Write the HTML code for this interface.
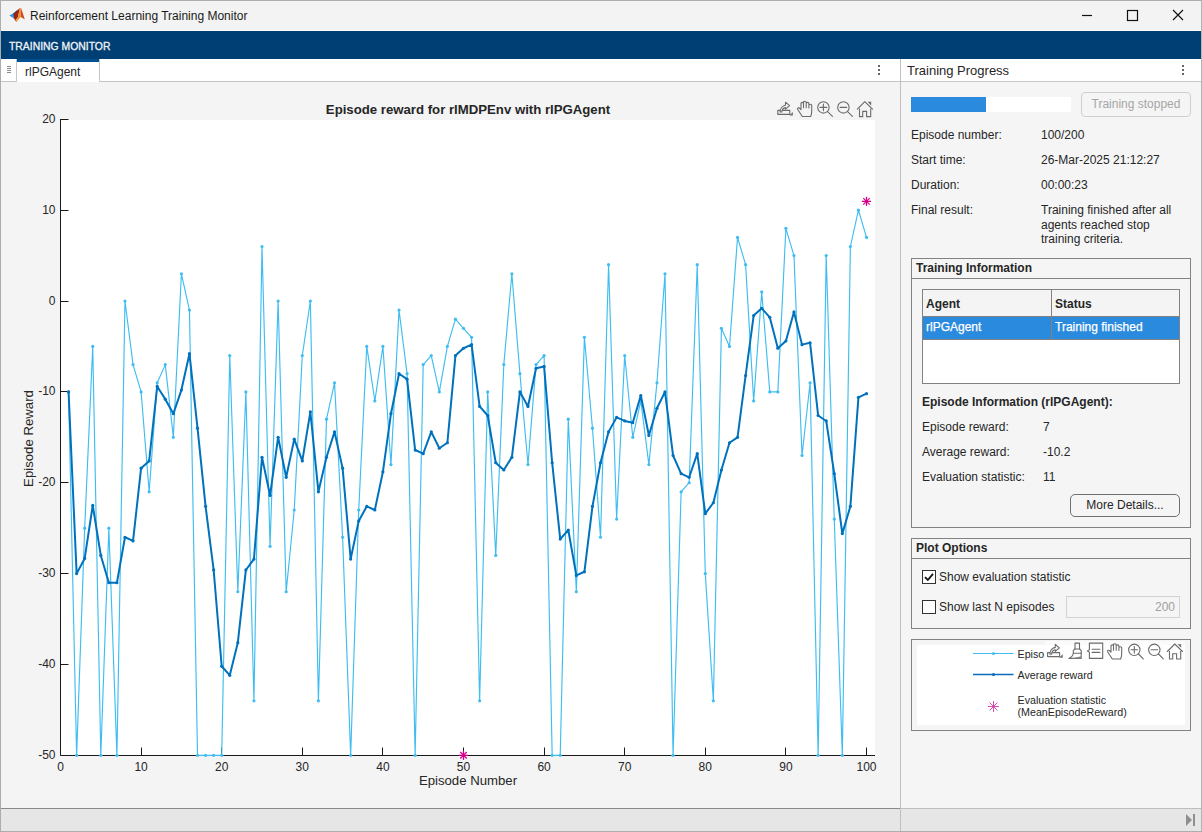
<!DOCTYPE html>
<html><head><meta charset="utf-8">
<style>
*{margin:0;padding:0;box-sizing:border-box}
html,body{width:1202px;height:832px;overflow:hidden;background:#f5f5f5;font-family:"Liberation Sans",sans-serif;color:#262626}
.a{position:absolute}
.t{position:absolute;white-space:nowrap;font-size:12px;line-height:14px}
#win{position:absolute;left:0;top:0;width:1202px;height:832px;border:1px solid #adadad;border-right-color:#b4b4b4}
</style></head><body>
<!-- title bar -->
<div class="a" style="left:0;top:0;width:1202px;height:31px;background:#f3f3f3"></div>
<div class="a" style="left:1px;top:30px;width:1200px;height:1px;background:#fbfbfb"></div>
<svg class="a" style="left:8px;top:6px" width="18" height="18" viewBox="0 0 18 18">
 <path d="M1.2,9.4 L5.9,7.3 L9.4,4.1 L7.6,10.5 L5.9,12.3 Z" fill="#3d8fd6"/>
 <path d="M4.5,8 L9.4,4.1 L7,10 Z" fill="#1f5f9a"/>
 <path d="M5.9,7.6 L11.8,2 L10.2,10 L8.3,16 L5.9,12.3 Z" fill="#9a2414"/>
 <path d="M11.8,2 L13.2,3.8 L12.6,11 L8.3,16 L10.2,10 Z" fill="#ef9030"/>
 <path d="M11.8,2 L13.4,2.8 L16.8,13.6 L13.8,11.6 L12.6,11 L13.2,3.8 Z" fill="#d24a1e"/>
 <path d="M7.5,13.5 L10.5,11 L8.3,16 Z" fill="#f5a23a"/>
</svg>
<div class="t" style="left:30px;top:9px;font-size:12px;color:#1a1a1a">Reinforcement Learning Training Monitor</div>
<svg class="a" style="left:1070px;top:0" width="132" height="31">
 <g stroke="#111" stroke-width="1.2" fill="none">
 <path d="M12,15.5 H22"/>
 <rect x="57.5" y="10.5" width="10" height="10"/>
 <path d="M103,10 L113,20 M113,10 L103,20"/>
 </g>
</svg>
<!-- toolstrip -->
<div class="a" style="left:1px;top:31px;width:1200px;height:28px;background:#003f73"></div>
<div class="t" style="left:9px;top:40px;font-size:10.4px;color:#f0f4f8;-webkit-text-stroke:0.3px #f0f4f8">TRAINING MONITOR</div>
<!-- left tab row -->
<div class="a" style="left:1px;top:59px;width:899px;height:23px;background:#fff;border-bottom:1px solid #c8c8c8"></div>
<div class="a" style="left:1px;top:59px;width:16px;height:23px;background:#fff;border-right:1px solid #c4c4c4;border-bottom:1px solid #c4c4c4;border-radius:0 0 2px 0"></div>
<svg class="a" style="left:7px;top:66px" width="6" height="10"><g fill="#8a8a8a"><rect x="0" y="0" width="4" height="1"/><rect x="0" y="2" width="4" height="1"/><rect x="0" y="4" width="4" height="1"/><rect x="0" y="6" width="4" height="1"/></g></svg>
<div class="a" style="left:17px;top:59px;width:82px;height:23px;background:#fff;border-top:3px solid #004f8f"></div>
<div class="a" style="left:99px;top:59px;width:801px;height:23px;background:#fff;border-left:1px solid #c4c4c4;border-bottom:1px solid #c4c4c4;border-radius:0 0 0 2px"></div>
<div class="t" style="left:25px;top:65px;font-size:12px;color:#262626">rlPGAgent</div>
<svg class="a" style="left:876px;top:64px" width="6" height="12"><g fill="#666"><rect x="2" y="1" width="2" height="2"/><rect x="2" y="5" width="2" height="2"/><rect x="2" y="9" width="2" height="2"/></g></svg>
<!-- left content bg -->
<div class="a" style="left:1px;top:82px;width:899px;height:726px;background:#f4f4f4"></div>
<!-- chart -->
<svg class="a" style="left:0;top:0" width="900" height="808">
<defs><clipPath id="pc"><rect x="58" y="116" width="820" height="644"/></clipPath></defs>
<rect x="60" y="120" width="815" height="636" fill="#fff"/>
<g stroke="#1a1a1a" stroke-width="1" fill="none">
<path d="M60.5,119 V755.5 H875"/>
<path d="M60.5,119.5 h8"/>
<path d="M60.5,210.5 h8"/>
<path d="M60.5,301.5 h8"/>
<path d="M60.5,391.5 h8"/>
<path d="M60.5,482.5 h8"/>
<path d="M60.5,573.5 h8"/>
<path d="M60.5,664.5 h8"/>
<path d="M60.5,755.5 h8"/>
<path d="M141.5,755.5 v-8"/>
<path d="M221.5,755.5 v-8"/>
<path d="M302.5,755.5 v-8"/>
<path d="M382.5,755.5 v-8"/>
<path d="M463.5,755.5 v-8"/>
<path d="M544.5,755.5 v-8"/>
<path d="M624.5,755.5 v-8"/>
<path d="M705.5,755.5 v-8"/>
<path d="M785.5,755.5 v-8"/>
<path d="M866.5,755.5 v-8"/>
</g>
<g clip-path="url(#pc)">
<polyline points="68.56,391.88 76.62,755.32 84.68,528.17 92.74,346.45 100.80,755.32 108.86,528.17 116.92,755.32 124.98,301.02 133.04,364.62 141.10,391.88 149.16,491.83 157.22,382.79 165.28,364.62 173.34,437.31 181.40,273.76 189.46,310.11 197.52,755.32 205.58,755.32 213.64,755.32 221.70,755.32 229.76,355.54 237.82,591.77 245.88,391.88 253.94,700.80 262.00,246.50 270.06,546.34 278.12,301.02 286.18,591.77 294.24,510.00 302.30,355.54 310.36,301.02 318.42,700.80 326.48,419.14 334.54,382.79 342.60,537.26 350.66,755.32 358.72,510.00 366.78,346.45 374.84,400.97 382.90,346.45 390.96,464.57 399.02,310.11 407.08,373.71 415.14,755.32 423.20,364.62 431.26,355.54 439.32,391.88 447.38,346.45 455.44,319.19 463.50,328.28 471.56,337.36 479.62,700.80 487.68,391.88 495.74,555.43 503.80,364.62 511.86,273.76 519.92,373.71 527.98,464.57 536.04,364.62 544.10,355.54 552.16,755.32 560.22,755.32 568.28,419.14 576.34,591.77 584.40,337.36 592.46,428.22 600.52,537.26 608.58,264.68 616.64,519.08 624.70,355.54 632.76,437.31 640.82,400.97 648.88,464.57 656.94,382.79 665.00,273.76 673.06,755.32 681.12,491.83 689.18,482.74 697.24,264.68 705.30,573.60 713.36,700.80 721.42,328.28 729.48,346.45 737.54,237.42 745.60,264.68 753.66,400.97 761.72,291.93 769.78,391.88 777.84,391.88 785.90,228.33 793.96,255.59 802.02,455.48 810.08,382.79 818.14,755.32 826.20,255.59 834.26,519.08 842.32,755.32 850.38,246.50 858.44,210.16 866.50,237.42" fill="none" stroke="#3FBDF0" stroke-width="1.15" stroke-linejoin="round"/>
<g fill="#3FBDF0"><circle cx="68.56" cy="391.88" r="1.6"/><circle cx="76.62" cy="755.32" r="1.6"/><circle cx="84.68" cy="528.17" r="1.6"/><circle cx="92.74" cy="346.45" r="1.6"/><circle cx="100.80" cy="755.32" r="1.6"/><circle cx="108.86" cy="528.17" r="1.6"/><circle cx="116.92" cy="755.32" r="1.6"/><circle cx="124.98" cy="301.02" r="1.6"/><circle cx="133.04" cy="364.62" r="1.6"/><circle cx="141.10" cy="391.88" r="1.6"/><circle cx="149.16" cy="491.83" r="1.6"/><circle cx="157.22" cy="382.79" r="1.6"/><circle cx="165.28" cy="364.62" r="1.6"/><circle cx="173.34" cy="437.31" r="1.6"/><circle cx="181.40" cy="273.76" r="1.6"/><circle cx="189.46" cy="310.11" r="1.6"/><circle cx="197.52" cy="755.32" r="1.6"/><circle cx="205.58" cy="755.32" r="1.6"/><circle cx="213.64" cy="755.32" r="1.6"/><circle cx="221.70" cy="755.32" r="1.6"/><circle cx="229.76" cy="355.54" r="1.6"/><circle cx="237.82" cy="591.77" r="1.6"/><circle cx="245.88" cy="391.88" r="1.6"/><circle cx="253.94" cy="700.80" r="1.6"/><circle cx="262.00" cy="246.50" r="1.6"/><circle cx="270.06" cy="546.34" r="1.6"/><circle cx="278.12" cy="301.02" r="1.6"/><circle cx="286.18" cy="591.77" r="1.6"/><circle cx="294.24" cy="510.00" r="1.6"/><circle cx="302.30" cy="355.54" r="1.6"/><circle cx="310.36" cy="301.02" r="1.6"/><circle cx="318.42" cy="700.80" r="1.6"/><circle cx="326.48" cy="419.14" r="1.6"/><circle cx="334.54" cy="382.79" r="1.6"/><circle cx="342.60" cy="537.26" r="1.6"/><circle cx="350.66" cy="755.32" r="1.6"/><circle cx="358.72" cy="510.00" r="1.6"/><circle cx="366.78" cy="346.45" r="1.6"/><circle cx="374.84" cy="400.97" r="1.6"/><circle cx="382.90" cy="346.45" r="1.6"/><circle cx="390.96" cy="464.57" r="1.6"/><circle cx="399.02" cy="310.11" r="1.6"/><circle cx="407.08" cy="373.71" r="1.6"/><circle cx="415.14" cy="755.32" r="1.6"/><circle cx="423.20" cy="364.62" r="1.6"/><circle cx="431.26" cy="355.54" r="1.6"/><circle cx="439.32" cy="391.88" r="1.6"/><circle cx="447.38" cy="346.45" r="1.6"/><circle cx="455.44" cy="319.19" r="1.6"/><circle cx="463.50" cy="328.28" r="1.6"/><circle cx="471.56" cy="337.36" r="1.6"/><circle cx="479.62" cy="700.80" r="1.6"/><circle cx="487.68" cy="391.88" r="1.6"/><circle cx="495.74" cy="555.43" r="1.6"/><circle cx="503.80" cy="364.62" r="1.6"/><circle cx="511.86" cy="273.76" r="1.6"/><circle cx="519.92" cy="373.71" r="1.6"/><circle cx="527.98" cy="464.57" r="1.6"/><circle cx="536.04" cy="364.62" r="1.6"/><circle cx="544.10" cy="355.54" r="1.6"/><circle cx="552.16" cy="755.32" r="1.6"/><circle cx="560.22" cy="755.32" r="1.6"/><circle cx="568.28" cy="419.14" r="1.6"/><circle cx="576.34" cy="591.77" r="1.6"/><circle cx="584.40" cy="337.36" r="1.6"/><circle cx="592.46" cy="428.22" r="1.6"/><circle cx="600.52" cy="537.26" r="1.6"/><circle cx="608.58" cy="264.68" r="1.6"/><circle cx="616.64" cy="519.08" r="1.6"/><circle cx="624.70" cy="355.54" r="1.6"/><circle cx="632.76" cy="437.31" r="1.6"/><circle cx="640.82" cy="400.97" r="1.6"/><circle cx="648.88" cy="464.57" r="1.6"/><circle cx="656.94" cy="382.79" r="1.6"/><circle cx="665.00" cy="273.76" r="1.6"/><circle cx="673.06" cy="755.32" r="1.6"/><circle cx="681.12" cy="491.83" r="1.6"/><circle cx="689.18" cy="482.74" r="1.6"/><circle cx="697.24" cy="264.68" r="1.6"/><circle cx="705.30" cy="573.60" r="1.6"/><circle cx="713.36" cy="700.80" r="1.6"/><circle cx="721.42" cy="328.28" r="1.6"/><circle cx="729.48" cy="346.45" r="1.6"/><circle cx="737.54" cy="237.42" r="1.6"/><circle cx="745.60" cy="264.68" r="1.6"/><circle cx="753.66" cy="400.97" r="1.6"/><circle cx="761.72" cy="291.93" r="1.6"/><circle cx="769.78" cy="391.88" r="1.6"/><circle cx="777.84" cy="391.88" r="1.6"/><circle cx="785.90" cy="228.33" r="1.6"/><circle cx="793.96" cy="255.59" r="1.6"/><circle cx="802.02" cy="455.48" r="1.6"/><circle cx="810.08" cy="382.79" r="1.6"/><circle cx="818.14" cy="755.32" r="1.6"/><circle cx="826.20" cy="255.59" r="1.6"/><circle cx="834.26" cy="519.08" r="1.6"/><circle cx="842.32" cy="755.32" r="1.6"/><circle cx="850.38" cy="246.50" r="1.6"/><circle cx="858.44" cy="210.16" r="1.6"/><circle cx="866.50" cy="237.42" r="1.6"/></g>
<polyline points="68.56,391.88 76.62,573.60 84.68,558.46 92.74,505.46 100.80,555.43 108.86,582.69 116.92,582.69 124.98,537.26 133.04,540.89 141.10,468.20 149.16,460.93 157.22,386.43 165.28,399.15 173.34,413.69 181.40,390.06 189.46,353.72 197.52,428.22 205.58,506.36 213.64,569.97 221.70,666.28 229.76,675.36 237.82,642.65 245.88,569.97 253.94,559.06 262.00,457.30 270.06,495.46 278.12,437.31 286.18,477.29 294.24,439.13 302.30,460.93 310.36,411.87 318.42,491.83 326.48,457.30 334.54,431.86 342.60,468.20 350.66,559.06 358.72,520.90 366.78,506.36 374.84,510.00 382.90,471.84 390.96,413.69 399.02,373.71 407.08,379.16 415.14,450.03 423.20,453.66 431.26,431.86 439.32,448.21 447.38,442.76 455.44,355.54 463.50,348.27 471.56,344.63 479.62,406.42 487.68,415.50 495.74,462.75 503.80,470.02 511.86,457.30 519.92,391.88 527.98,406.42 536.04,368.26 544.10,366.44 552.16,462.75 560.22,539.07 568.28,529.99 576.34,575.42 584.40,571.78 592.46,506.36 600.52,462.75 608.58,431.86 616.64,417.32 624.70,420.96 632.76,422.77 640.82,395.51 648.88,435.49 656.94,408.23 665.00,391.88 673.06,455.48 681.12,473.65 689.18,477.29 697.24,453.66 705.30,513.63 713.36,502.73 721.42,470.02 729.48,442.76 737.54,437.31 745.60,375.53 753.66,315.56 761.72,308.29 769.78,317.37 777.84,348.27 785.90,341.00 793.96,311.92 802.02,344.63 810.08,342.82 818.14,415.50 826.20,420.96 834.26,473.65 842.32,533.62 850.38,506.36 858.44,397.33 866.50,393.70" fill="none" stroke="#0072BD" stroke-width="2" stroke-linejoin="round"/>
<g fill="#0072BD"><circle cx="68.56" cy="391.88" r="1.6"/><circle cx="76.62" cy="573.60" r="1.6"/><circle cx="84.68" cy="558.46" r="1.6"/><circle cx="92.74" cy="505.46" r="1.6"/><circle cx="100.80" cy="555.43" r="1.6"/><circle cx="108.86" cy="582.69" r="1.6"/><circle cx="116.92" cy="582.69" r="1.6"/><circle cx="124.98" cy="537.26" r="1.6"/><circle cx="133.04" cy="540.89" r="1.6"/><circle cx="141.10" cy="468.20" r="1.6"/><circle cx="149.16" cy="460.93" r="1.6"/><circle cx="157.22" cy="386.43" r="1.6"/><circle cx="165.28" cy="399.15" r="1.6"/><circle cx="173.34" cy="413.69" r="1.6"/><circle cx="181.40" cy="390.06" r="1.6"/><circle cx="189.46" cy="353.72" r="1.6"/><circle cx="197.52" cy="428.22" r="1.6"/><circle cx="205.58" cy="506.36" r="1.6"/><circle cx="213.64" cy="569.97" r="1.6"/><circle cx="221.70" cy="666.28" r="1.6"/><circle cx="229.76" cy="675.36" r="1.6"/><circle cx="237.82" cy="642.65" r="1.6"/><circle cx="245.88" cy="569.97" r="1.6"/><circle cx="253.94" cy="559.06" r="1.6"/><circle cx="262.00" cy="457.30" r="1.6"/><circle cx="270.06" cy="495.46" r="1.6"/><circle cx="278.12" cy="437.31" r="1.6"/><circle cx="286.18" cy="477.29" r="1.6"/><circle cx="294.24" cy="439.13" r="1.6"/><circle cx="302.30" cy="460.93" r="1.6"/><circle cx="310.36" cy="411.87" r="1.6"/><circle cx="318.42" cy="491.83" r="1.6"/><circle cx="326.48" cy="457.30" r="1.6"/><circle cx="334.54" cy="431.86" r="1.6"/><circle cx="342.60" cy="468.20" r="1.6"/><circle cx="350.66" cy="559.06" r="1.6"/><circle cx="358.72" cy="520.90" r="1.6"/><circle cx="366.78" cy="506.36" r="1.6"/><circle cx="374.84" cy="510.00" r="1.6"/><circle cx="382.90" cy="471.84" r="1.6"/><circle cx="390.96" cy="413.69" r="1.6"/><circle cx="399.02" cy="373.71" r="1.6"/><circle cx="407.08" cy="379.16" r="1.6"/><circle cx="415.14" cy="450.03" r="1.6"/><circle cx="423.20" cy="453.66" r="1.6"/><circle cx="431.26" cy="431.86" r="1.6"/><circle cx="439.32" cy="448.21" r="1.6"/><circle cx="447.38" cy="442.76" r="1.6"/><circle cx="455.44" cy="355.54" r="1.6"/><circle cx="463.50" cy="348.27" r="1.6"/><circle cx="471.56" cy="344.63" r="1.6"/><circle cx="479.62" cy="406.42" r="1.6"/><circle cx="487.68" cy="415.50" r="1.6"/><circle cx="495.74" cy="462.75" r="1.6"/><circle cx="503.80" cy="470.02" r="1.6"/><circle cx="511.86" cy="457.30" r="1.6"/><circle cx="519.92" cy="391.88" r="1.6"/><circle cx="527.98" cy="406.42" r="1.6"/><circle cx="536.04" cy="368.26" r="1.6"/><circle cx="544.10" cy="366.44" r="1.6"/><circle cx="552.16" cy="462.75" r="1.6"/><circle cx="560.22" cy="539.07" r="1.6"/><circle cx="568.28" cy="529.99" r="1.6"/><circle cx="576.34" cy="575.42" r="1.6"/><circle cx="584.40" cy="571.78" r="1.6"/><circle cx="592.46" cy="506.36" r="1.6"/><circle cx="600.52" cy="462.75" r="1.6"/><circle cx="608.58" cy="431.86" r="1.6"/><circle cx="616.64" cy="417.32" r="1.6"/><circle cx="624.70" cy="420.96" r="1.6"/><circle cx="632.76" cy="422.77" r="1.6"/><circle cx="640.82" cy="395.51" r="1.6"/><circle cx="648.88" cy="435.49" r="1.6"/><circle cx="656.94" cy="408.23" r="1.6"/><circle cx="665.00" cy="391.88" r="1.6"/><circle cx="673.06" cy="455.48" r="1.6"/><circle cx="681.12" cy="473.65" r="1.6"/><circle cx="689.18" cy="477.29" r="1.6"/><circle cx="697.24" cy="453.66" r="1.6"/><circle cx="705.30" cy="513.63" r="1.6"/><circle cx="713.36" cy="502.73" r="1.6"/><circle cx="721.42" cy="470.02" r="1.6"/><circle cx="729.48" cy="442.76" r="1.6"/><circle cx="737.54" cy="437.31" r="1.6"/><circle cx="745.60" cy="375.53" r="1.6"/><circle cx="753.66" cy="315.56" r="1.6"/><circle cx="761.72" cy="308.29" r="1.6"/><circle cx="769.78" cy="317.37" r="1.6"/><circle cx="777.84" cy="348.27" r="1.6"/><circle cx="785.90" cy="341.00" r="1.6"/><circle cx="793.96" cy="311.92" r="1.6"/><circle cx="802.02" cy="344.63" r="1.6"/><circle cx="810.08" cy="342.82" r="1.6"/><circle cx="818.14" cy="415.50" r="1.6"/><circle cx="826.20" cy="420.96" r="1.6"/><circle cx="834.26" cy="473.65" r="1.6"/><circle cx="842.32" cy="533.62" r="1.6"/><circle cx="850.38" cy="506.36" r="1.6"/><circle cx="858.44" cy="397.33" r="1.6"/><circle cx="866.50" cy="393.70" r="1.6"/></g>
</g>
<g stroke="#D4008C" stroke-width="1.3"><line x1="458.90" y1="755.32" x2="468.10" y2="755.32"/><line x1="460.25" y1="752.07" x2="466.75" y2="758.57"/><line x1="463.50" y1="750.72" x2="463.50" y2="759.92"/><line x1="466.75" y1="752.07" x2="460.25" y2="758.57"/></g>
<g stroke="#D4008C" stroke-width="1.3"><line x1="861.90" y1="201.37" x2="871.10" y2="201.37"/><line x1="863.25" y1="198.12" x2="869.75" y2="204.63"/><line x1="866.50" y1="196.77" x2="866.50" y2="205.97"/><line x1="869.75" y1="198.12" x2="863.25" y2="204.63"/></g>
<g font-family="Liberation Sans" font-size="12" fill="#262626">
<text x="55.5" y="122.80" text-anchor="end">20</text>
<text x="55.5" y="213.66" text-anchor="end">10</text>
<text x="55.5" y="304.52" text-anchor="end">0</text>
<text x="55.5" y="395.38" text-anchor="end">-10</text>
<text x="55.5" y="486.24" text-anchor="end">-20</text>
<text x="55.5" y="577.10" text-anchor="end">-30</text>
<text x="55.5" y="667.96" text-anchor="end">-40</text>
<text x="55.5" y="758.82" text-anchor="end">-50</text>
<text x="60.50" y="770.5" text-anchor="middle">0</text>
<text x="141.10" y="770.5" text-anchor="middle">10</text>
<text x="221.70" y="770.5" text-anchor="middle">20</text>
<text x="302.30" y="770.5" text-anchor="middle">30</text>
<text x="382.90" y="770.5" text-anchor="middle">40</text>
<text x="463.50" y="770.5" text-anchor="middle">50</text>
<text x="544.10" y="770.5" text-anchor="middle">60</text>
<text x="624.70" y="770.5" text-anchor="middle">70</text>
<text x="705.30" y="770.5" text-anchor="middle">80</text>
<text x="785.90" y="770.5" text-anchor="middle">90</text>
<text x="866.50" y="770.5" text-anchor="middle">100</text>
</g>
<text x="468" y="785" text-anchor="middle" font-family="Liberation Sans" font-size="13.2" fill="#262626">Episode Number</text>
<text transform="translate(33,438.5) rotate(-90)" text-anchor="middle" font-family="Liberation Sans" font-size="13.2" fill="#262626">Episode Reward</text>
<text x="468" y="114" text-anchor="middle" font-family="Liberation Sans" font-weight="bold" font-size="13.2" fill="#262626">Episode reward for rlMDPEnv with rlPGAgent</text>
</svg>
<!-- axes toolbar -->
<svg class="a" style="left:774px;top:98px" width="102" height="22"><g stroke="#6b6b6b" stroke-width="1.1" fill="none" stroke-linecap="round" stroke-linejoin="round"><rect x="3.8" y="12.4" width="12" height="4" fill="none"/><path d="M6.1,14.0 C6.1,10.0 8.8,7.6 11.5,7.2 V4.2 L15.6,7.6 L11.5,11.2 V9.6 C9.4,9.9 8.0,11.6 7.8,14.0 Z" fill="#f4f4f4"/><path d="M15.4,17.6 L18.9,14.0 V17.6 Z" fill="#6b6b6b" stroke="none"/><path d="M28.3,18.5 L23.6,11.2 C23.1,10.2 24.4,9.3 25.4,10.0 L27.0,11.6 V5.4 C27.0,4.0 29.5,4.0 29.5,5.4 V9.8 V4.4 C29.5,2.9 32.2,2.9 32.2,4.4 V9.8 V5.4 C32.2,4.0 34.9,4.0 34.9,5.4 V10.0 V7.3 C34.9,5.9 37.7,5.9 37.7,7.3 V13.0 C37.7,15.3 37.2,17.0 36.7,18.5 Z"/><circle cx="49.4" cy="9.4" r="5.7"/><path d="M53.6,13.6 L58.4,18.4"/><path d="M46.1,9.4 H52.7"/><path d="M49.4,6.1 V12.7"/><circle cx="69.4" cy="9.4" r="5.7"/><path d="M73.6,13.6 L78.4,18.4"/><path d="M66.1,9.4 H72.7"/><path d="M83.3,11.1 L90.8,3.6 L98.5,11.1"/><path d="M85.5,10.6 V18.6 H88.7 V13.4 H92.6 V18.6 H96.7 V10.6" stroke-linecap="butt" stroke-linejoin="miter"/><path d="M93.6,3.8 H97.2 V7.4 Z" fill="#6b6b6b" stroke="none"/></g></svg>
<!-- divider -->
<div class="a" style="left:900px;top:59px;width:1px;height:773px;background:#c0c0c0"></div>
<!-- right header -->
<div class="a" style="left:901px;top:59px;width:300px;height:23px;background:#fff;border-bottom:1px solid #c8c8c8"></div>
<div class="t" style="left:907px;top:63px;font-size:13px;line-height:15px;color:#262626">Training Progress</div>
<svg class="a" style="left:1181px;top:64px" width="6" height="12"><g fill="#666"><rect x="1" y="1" width="2" height="2"/><rect x="1" y="5" width="2" height="2"/><rect x="1" y="9" width="2" height="2"/></g></svg>
<div class="a" style="left:901px;top:82px;width:300px;height:726px;background:#f5f5f5"></div>
<!-- progress -->
<div class="a" style="left:911px;top:97px;width:160px;height:15px;background:#fff"></div>
<div class="a" style="left:911px;top:97px;width:75px;height:15px;background:#2a8ade"></div>
<div class="a" style="left:1081px;top:92px;width:110px;height:25px;border:1px solid #cfcfcf;border-radius:4px;background:#f5f5f5"></div>
<div class="t" style="left:1081px;top:97px;width:110px;text-align:center;color:#a6a6a6">Training stopped</div>
<!-- info rows -->
<div class="t" style="left:911px;top:128px">Episode number:</div><div class="t" style="left:1041px;top:128px">100/200</div>
<div class="t" style="left:911px;top:153px">Start time:</div><div class="t" style="left:1041px;top:153px">26-Mar-2025 21:12:27</div>
<div class="t" style="left:911px;top:178px">Duration:</div><div class="t" style="left:1041px;top:178px">00:00:23</div>
<div class="t" style="left:911px;top:203px">Final result:</div><div class="t" style="left:1041px;top:203px;line-height:14.7px">Training finished after all<br>agents reached stop<br>training criteria.</div>
<!-- training information -->
<div class="a" style="left:911px;top:258px;width:280px;height:270px;border:1px solid #828282"></div>
<div class="a" style="left:912px;top:278px;width:278px;height:1px;background:#828282"></div>
<div class="t" style="left:916px;top:261px;font-weight:bold">Training Information</div>
<div class="a" style="left:922px;top:289px;width:258px;height:95px;border:1px solid #828282;background:#fff"></div>
<div class="a" style="left:923px;top:290px;width:256px;height:27px;background:#f4f4f4;border-bottom:1px solid #828282"></div>
<div class="a" style="left:923px;top:317px;width:256px;height:23px;background:#2a8ade;border-bottom:1px solid #828282"></div>
<div class="a" style="left:1051px;top:290px;width:1px;height:50px;background:#828282"></div>
<div class="t" style="left:926px;top:297px;font-weight:bold">Agent</div>
<div class="t" style="left:1055px;top:297px;font-weight:bold">Status</div>
<div class="t" style="left:926px;top:320px;color:#fff;-webkit-text-stroke:0.25px #fff">rlPGAgent</div>
<div class="t" style="left:1055px;top:320px;color:#fff;-webkit-text-stroke:0.25px #fff">Training finished</div>
<div class="t" style="left:922px;top:395px;font-weight:bold">Episode Information (rlPGAgent):</div>
<div class="t" style="left:922px;top:420px">Episode reward:</div><div class="t" style="left:1043px;top:420px">7</div>
<div class="t" style="left:922px;top:445px">Average reward:</div><div class="t" style="left:1043px;top:445px">-10.2</div>
<div class="t" style="left:922px;top:470px">Evaluation statistic:</div><div class="t" style="left:1043px;top:470px">11</div>
<div class="a" style="left:1070px;top:494px;width:110px;height:23px;border:1px solid #707070;border-radius:5px;background:#f5f5f5"></div>
<div class="t" style="left:1070px;top:498px;width:110px;text-align:center">More Details...</div>
<!-- plot options -->
<div class="a" style="left:911px;top:538px;width:280px;height:91px;border:1px solid #828282"></div>
<div class="a" style="left:912px;top:558px;width:278px;height:1px;background:#828282"></div>
<div class="t" style="left:916px;top:541px;font-weight:bold">Plot Options</div>
<div class="a" style="left:922px;top:570px;width:14px;height:14px;border:1px solid #333;background:#fff"></div>
<svg class="a" style="left:922px;top:570px" width="14" height="14"><path d="M3,7.2 L5.8,10 L11,3.8" stroke="#111" stroke-width="1.8" fill="none"/></svg>
<div class="t" style="left:939px;top:570px">Show evaluation statistic</div>
<div class="a" style="left:922px;top:600px;width:14px;height:14px;border:1px solid #333;background:#fff"></div>
<div class="t" style="left:939px;top:600px">Show last N episodes</div>
<div class="a" style="left:1066px;top:596px;width:114px;height:22px;border:1px solid #d2d2d2;background:#f5f5f5"></div>
<div class="t" style="left:1066px;top:600px;width:109px;text-align:right;color:#a0a0a0">200</div>
<!-- legend -->
<div class="a" style="left:911px;top:639px;width:280px;height:92px;border:1px solid #828282"></div>
<div class="a" style="left:917px;top:645px;width:268px;height:80px;background:#fff"></div>
<svg class="a" style="left:917px;top:641px" width="268" height="88">
 <g stroke-width="1.2"><path d="M56,12.5 H96.5" stroke="#3FBDF0"/><path d="M56,33.5 H96.5" stroke="#0a6cbf" stroke-width="1.3"/></g>
 <circle cx="76.5" cy="12.5" r="1.5" fill="#3FBDF0"/><circle cx="76.5" cy="33.5" r="1.6" fill="#0a6cbf"/>
 <g stroke="#D63AA8" stroke-width="0.9"><path d="M76.5,60 V71 M71,65.5 H82 M72.6,61.6 L80.4,69.4 M80.4,61.6 L72.6,69.4"/></g>
 <g font-family="Liberation Sans" font-size="10.7" fill="#262626">
  <text x="100.5" y="17">Episo</text>
  <text x="100.5" y="38">Average reward</text>
  <text x="100.5" y="63">Evaluation statistic</text>
  <text x="100.5" y="75">(MeanEpisodeReward)</text>
 </g>
</svg>
<!-- legend toolbar -->
<svg class="a" style="left:1045px;top:641px" width="140" height="22"><rect x="0" y="0" width="140" height="22" fill="#fff" opacity="0.6"/><g stroke="#6b6b6b" stroke-width="1.1" fill="none" stroke-linecap="round" stroke-linejoin="round"><rect x="2.6" y="11.6" width="12" height="4" fill="none"/><path d="M4.9,13.2 C4.9,9.2 7.6,6.8 10.3,6.4 V3.4 L14.4,6.8 L10.3,10.4 V8.8 C8.2,9.1 6.8,10.8 6.6,13.2 Z" fill="#f4f4f4"/><path d="M14.2,16.8 L17.7,13.2 V16.8 Z" fill="#6b6b6b" stroke="none"/><path d="M30.0,8.0 V2.1 H34.5 V8.0"/><path d="M28.3,9.4 L30.0,8.0 H34.5 L36.2,9.4 V12.3 H28.3 Z"/><path d="M28.3,12.3 C28.0,15.0 26.0,16.5 23.8,17.4 H36.2 V12.3"/><path d="M26.0,17.4 L36.2,15.2 V17.4 Z" fill="#8a8a8a" stroke="none"/><path d="M44.4,2.1 H57.7 V17.4 H44.4 V11.2 L42.5,9.9 L44.4,8.6 Z" stroke-linejoin="miter"/><path d="M47.1,8.2 H54.9 M47.1,11.4 H54.9"/><path d="M67.3,18.0 L62.6,10.7 C62.1,9.7 63.4,8.8 64.4,9.5 L66.0,11.1 V4.9 C66.0,3.5 68.5,3.5 68.5,4.9 V9.3 V3.9 C68.5,2.4 71.2,2.4 71.2,3.9 V9.3 V4.9 C71.2,3.5 73.9,3.5 73.9,4.9 V9.5 V6.8 C73.9,5.4 76.7,5.4 76.7,6.8 V12.5 C76.7,14.8 76.2,16.5 75.7,18.0 Z"/><circle cx="89.3" cy="8.8" r="5.7"/><path d="M93.5,13.0 L98.3,17.8"/><path d="M86.0,8.8 H92.6"/><path d="M89.3,5.5 V12.1"/><circle cx="109.3" cy="8.8" r="5.7"/><path d="M113.5,13.0 L118.3,17.8"/><path d="M106.0,8.8 H112.6"/><path d="M122.3,10.5 L129.8,3.0 L137.5,10.5"/><path d="M124.5,10.0 V18.0 H127.7 V12.8 H131.6 V18.0 H135.7 V10.0" stroke-linecap="butt" stroke-linejoin="miter"/><path d="M132.6,3.2 H136.2 V6.8 Z" fill="#6b6b6b" stroke="none"/></g></svg>
<!-- status bar -->
<div class="a" style="left:1px;top:808px;width:899px;height:1px;background:#8a8a8a"></div>
<div class="a" style="left:901px;top:808px;width:300px;height:1px;background:#bdbdbd"></div>
<div class="a" style="left:1px;top:809px;width:1200px;height:22px;background:#e6e6e6"></div>
<div class="a" style="left:900px;top:809px;width:1px;height:22px;background:#c0c0c0"></div>
<svg class="a" style="left:1185px;top:813px" width="12" height="14"><path d="M1,1 L7,7 L1,13 Z" fill="#8f8f8f"/><rect x="8" y="1" width="2" height="12" fill="#8f8f8f"/></svg>
<div id="win"></div>
</body></html>
